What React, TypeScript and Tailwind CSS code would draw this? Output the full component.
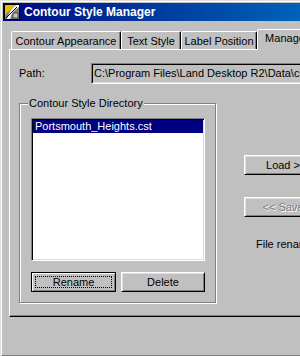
const raised =
  'border border-t-white border-l-white border-b-black border-r-black shadow-[inset_1px_1px_0_#dfdfdf,inset_-1px_-1px_0_#808080]';
const sunken =
  'border border-t-[#808080] border-l-[#808080] border-b-white border-r-white shadow-[inset_1px_1px_0_#000,inset_-1px_-1px_0_#dfdfdf]';

function AppIcon() {
  return (
    <svg width="16" height="16" viewBox="0 0 16 16" className="shrink-0">
      <rect x="0.5" y="0.5" width="15" height="15" fill="#808080" stroke="#000" />
      <path d="M1 1 H11 L1 11 Z" fill="#e8c000" />
      <path d="M12 1 C8 4 5 8 3 15 H6 C7 10 10 6 15 3 V1 Z" fill="#fff" />
      <path d="M2 14 L13 3" stroke="#000" strokeWidth="1" />
      <rect x="9" y="9" width="5" height="5" fill="#c0c0c0" stroke="#404040" strokeWidth="0.8" />
    </svg>
  );
}

function Tab({ label, width, active }: { label: string; width: number; active?: boolean }) {
  if (active) {
    return (
      <div
        style={{ width }}
        className="relative z-10 -mb-px h-[21px] shrink-0 bg-[#c0c0c0] border-t border-l border-white rounded-tl-[2px] flex items-center justify-center pb-[3px] whitespace-nowrap"
      >
        {label}
      </div>
    );
  }
  return (
    <div
      style={{ width }}
      className="h-[18px] shrink-0 border-t border-l border-white border-r border-r-black shadow-[inset_-1px_0_0_#808080] rounded-tl-[2px] rounded-tr-[2px] flex items-center justify-center pt-[1px] whitespace-nowrap"
    >
      {label}
    </div>
  );
}

export default function App() {
  return (
    <div className="w-[300px] h-[356px] overflow-hidden bg-[#c0c0c0] text-[11px] leading-[13px] text-black font-['Liberation_Sans',Arial,sans-serif]">
      <div className="w-[430px] h-[356px] border-t border-l border-[#dfdfdf]">
        <div className="h-[355px] border-t border-l border-white border-b border-b-[#808080] p-px">
          {/* title bar */}
          <div className="h-[18px] flex items-center bg-linear-to-r from-[#000080] to-[#1084d0]">
            <div className="ml-px">
              <AppIcon />
            </div>
            <span className="ml-[4px] text-white font-bold text-[12px] whitespace-nowrap">
              Contour Style Manager
            </span>
          </div>

          <div className="ml-[6px] mt-[8px]">
            {/* tabs */}
            <div className="flex items-end h-[20px] pl-[2px]">
              <Tab label="Contour Appearance" width={110} />
              <Tab label="Text Style" width={60} />
              <Tab label="Label Position" width={76} />
              <Tab label="Manage Styles" width={88} active />
            </div>

            {/* tab panel */}
            <div className="w-[410px] h-[268px] border-t border-l border-white border-b border-b-black shadow-[inset_0_-1px_0_#808080]">
              <div className="flex items-center mt-[13px] pl-[9px]">
                <span className="w-[72px]">Path:</span>
                <div className={`${sunken} h-[21px] flex-1 flex items-center pl-[2px] whitespace-nowrap overflow-hidden`}>
                  {'C:\\Program Files\\Land Desktop R2\\Data\\contour styles'}
                </div>
              </div>

              <div className="flex mt-[19px] ml-[9px]">
                {/* group box */}
                <div className="relative w-[197px] h-[200px] border border-[#808080] shadow-[inset_1px_1px_0_#fff,1px_1px_0_#fff] pt-[14px] pl-[11px]">
                  <span className="absolute top-[-7px] left-[8px] px-px bg-[#c0c0c0] whitespace-nowrap">
                    Contour Style Directory
                  </span>
                  <div className={`${sunken} w-[174px] h-[143px] bg-white p-px`}>
                    <div className="h-[13px] bg-[#000080] text-white pl-[2px] flex items-center whitespace-nowrap">
                      Portsmouth_Heights.cst
                    </div>
                  </div>
                  <div className="flex gap-[5px] mt-[11px]">
                    <button className="w-[85px] h-[20px] border border-black shadow-[inset_1px_1px_0_#fff,inset_-1px_-1px_0_#808080] outline-1 outline-dotted outline-black outline-offset-[-5px] flex items-center justify-center">
                      Rename
                    </button>
                    <button className={`${raised} w-[84px] h-[20px] flex items-center justify-center`}>
                      Delete
                    </button>
                  </div>
                </div>

                {/* right column */}
                <div className="ml-[28px] flex flex-col">
                  <button className={`${raised} mt-[52px] w-[78px] h-[20px] flex items-center justify-center whitespace-nowrap`}>
                    {'Load >'}
                  </button>
                  <button
                    className={`${raised} mt-[22px] w-[78px] h-[20px] flex items-center justify-center whitespace-nowrap text-[#808080] [text-shadow:1px_1px_0_#fff]`}
                  >
                    {'<< Save'}
                  </button>
                  <span className="mt-[21px] ml-[12px] whitespace-nowrap">File renamed.</span>
                </div>
              </div>
            </div>
          </div>
        </div>
      </div>
    </div>
  );
}
